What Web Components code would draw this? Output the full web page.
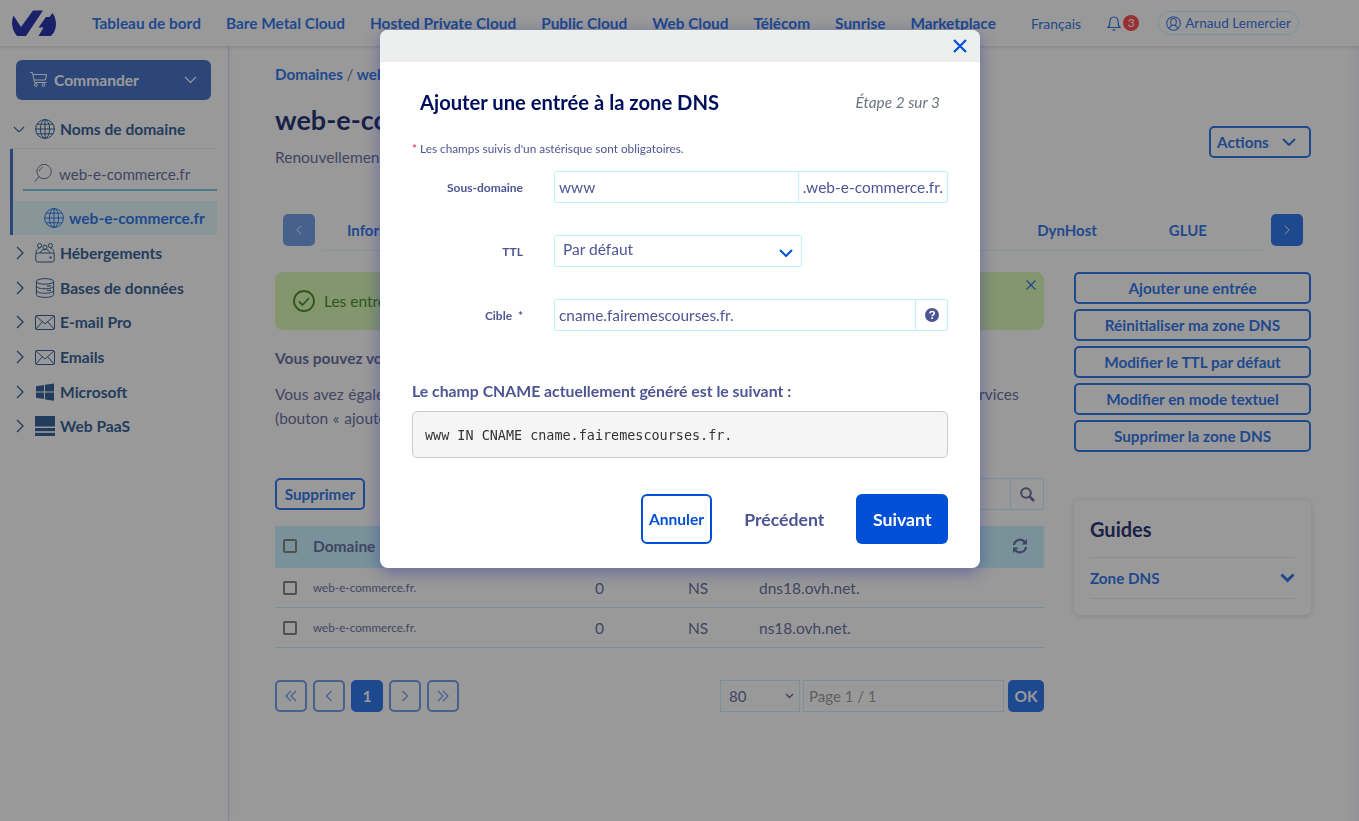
<!DOCTYPE html>
<html lang="fr">
<head>
<meta charset="utf-8">
<title>OVHcloud - Zone DNS</title>
<style>
  html, body { margin: 0; height: 100%; overflow: hidden; background: #fff; }
  html { --p: #0a5ee8; --tree: #0f4585; }
  body { font-family: "Lato", "Liberation Sans", sans-serif; color: #4d5693; }
  .shell { display: flex; height: 775px; }
</style>
</head>
<body>
<ovh-header></ovh-header>
<div class="shell">
  <ovh-sidebar></ovh-sidebar>
  <zone-page></zone-page>
</div>
<dns-modal></dns-modal>

<script>
const icons = {
  globe: `<svg viewBox="0 0 20 20" fill="none" stroke="currentColor" stroke-width="1"><circle cx="10" cy="10" r="9.4"/><ellipse cx="10" cy="10" rx="4.6" ry="9.4"/><path d="M10 .6v18.8M.6 10h18.8M2 5.2h16M2 14.8h16"/></svg>`,
  search: `<svg viewBox="0 0 20 20" fill="none" stroke="currentColor" stroke-width="1.100"><circle cx="11.2" cy="8.4" r="8"/><path d="M5.600 14 1 19.500M6 8c.2-2 1.600-3.600 3.600-4"/></svg>`,
  hosting: `<svg viewBox="0 0 20 20" fill="none" stroke="currentColor" stroke-width="1"><circle cx="4.500" cy="2.600" r="2.100"/><circle cx="10" cy="4.200" r="2.100"/><circle cx="15.500" cy="2.600" r="2.100"/><path d="M1 11c0-4 1.500-5.600 3.500-5.600M19 11c0-4-1.500-5.600-3.500-5.600M5.500 10c0-2.600 2-3.500 4.500-3.500s4.500.9 4.500 3.500"/><rect x=".8" y="10" width="18.400" height="9" rx="2"/><path d="M15.500 13.500v2" stroke-width="2"/></svg>`,
  db: `<svg viewBox="0 0 20 20" fill="none" stroke="currentColor" stroke-width="1"><ellipse cx="10" cy="3.400" rx="8.600" ry="2.800"/><path d="M1.400 3.400v13.200c0 1.600 3.800 2.800 8.600 2.800s8.600-1.200 8.600-2.800V3.400M1.400 8c0 1.600 3.800 2.800 8.600 2.800 4.800 0 8.600-1.200 8.600-2.800M1.400 12.400c0 1.600 3.800 2.800 8.600 2.800 4.800 0 8.600-1.200 8.600-2.800M12 8h4M12 12.400h4"/></svg>`,
  mail: `<svg viewBox="0 0 20 15" fill="none" stroke="currentColor" stroke-width="1"><rect x=".5" y=".5" width="19" height="14" rx="1.500"/><path d="M1 1l9 8 9-8M1 14l6.500-7.500M19 14l-6.500-7.500"/></svg>`,
  windows: `<svg viewBox="0 0 20 20" fill="currentColor"><path d="M1 4.200 9 3v6.400H1zM10 2.800 19 1.400v8H10zM1 10.600h8V17l-8-1.200zM10 10.600h9v8.200L10 17.400z"/></svg>`,
  paas: `<svg viewBox="0 0 20 20" fill="currentColor"><rect width="20" height="10.500"/><rect y="12" width="20" height="3.200"/><rect y="16.800" width="20" height="3.200"/></svg>`,
  down: `<svg viewBox="0 0 14 8" fill="none" stroke="currentColor" stroke-width="1.300"><path d="M1 1l6 6 6-6"/></svg>`,
  right: `<svg viewBox="0 0 8 14" fill="none" stroke="currentColor" stroke-width="1.300"><path d="M1 1l6 6-6 6"/></svg>`,
  left: `<svg viewBox="0 0 8 14" fill="none" stroke="currentColor" stroke-width="1.300"><path d="M7 1 1 7l6 6"/></svg>`,
  cart: `<svg viewBox="0 0 17 15" fill="none" stroke="currentColor" stroke-width="1"><path d="M0 .6h2.500l2 9.900h12M3 2.500h13.500l-1 5.500H4.200"/><circle cx="5.800" cy="13" r="1.400"/><circle cx="13.500" cy="13" r="1.400"/></svg>`
};

class OvhHeader extends HTMLElement {
  constructor() {
    super();
    this.shadowDOM = this.attachShadow({ mode: 'open' });
  }

  connectedCallback() {
    const links = ['Tableau de bord', 'Bare Metal Cloud', 'Hosted Private Cloud', 'Public Cloud', 'Web Cloud', 'Télécom', 'Sunrise', 'Marketplace'];
    this.shadowDOM.innerHTML = `
    <style>
    :host {
      display: flex;
      align-items: center;
      height: 46px;
      box-sizing: border-box;
      padding-left: 12px;
      background: #fff;
      position: relative;
      z-index: 2;
      box-shadow: 0 1px 4px rgba(0,0,0,.18);
    }
    .logo { width: 44px; height: 26px; display: block; margin-top: -1px; color: #000e9c; }
    nav { display: flex; gap: 25px; width: 904px; margin-left: 36px; font-size: 15.4px; font-weight: 700; color: var(--p); white-space: nowrap; }
    .lang { margin-left: 35px; font-size: 14px; color: var(--p); }
    .bell { width: 14px; height: 15px; margin-left: 26px; color: var(--p); }
    .badge {
      width: 16px; height: 16px; border-radius: 50%; margin-left: 2px;
      background: #ff2a30; color: #fff; font-size: 12px; line-height: 16px; text-align: center;
    }
    .chip {
      display: flex; align-items: center; gap: 4px;
      height: 24px; box-sizing: border-box; margin-left: 19px; padding: 0 7px;
      border: 1px solid #bef1ff; border-radius: 12px;
      font-size: 13.6px; color: var(--p); white-space: nowrap;
    }
    .chip svg { width: 15px; height: 15px; }
    </style>
    <svg class="logo" viewBox="12 10 44 26" fill="currentColor">
      <path d="M13.500 15.500 21 27 33 10.500H43L26 36H17Q12 30 12 23 12 19 13.500 15.500Z"/>
      <path d="M52.500 13Q56 18 56 24 56 31 51 36H38.500L43.500 27.500H38.500L46 17H49.500Z"/>
    </svg>
    <nav>${links.map(l => `<span>${l}</span>`).join('')}</nav>
    <span class="lang">Français</span>
    <svg class="bell" viewBox="0 0 14 15" fill="none" stroke="currentColor" stroke-width="1.200"><path d="M1 11.500c1.500-1 1.800-2.500 1.800-5C2.800 3 4.500 1 7 1s4.200 2 4.200 5.500c0 2.500.3 4 1.800 5zM5.500 13.800h3"/></svg>
    <span class="badge">3</span>
    <span class="chip">
      <svg viewBox="0 0 16 16" fill="none" stroke="currentColor" stroke-width="1.100"><circle cx="8" cy="8" r="7.200"/><ellipse cx="8" cy="6.300" rx="3" ry="3.700"/><path d="M3.500 13.500c.5-2.500 2-3 3-3.500M12.500 13.500c-.5-2.500-2-3-3-3.500"/></svg>
      Arnaud Lemercier
    </span>`;
  }
}

class SideItem extends HTMLElement {
  constructor() {
    super();
    this.shadowDOM = this.attachShadow({ mode: 'open' });
  }

  connectedCallback() {
    const icon = this.getAttribute('icon');
    const h = { mail: 15, paas: 20 }[icon] || 20;
    this.shadowDOM.innerHTML = `
    <style>
    :host {
      display: flex;
      align-items: center;
      height: 34.6px;
      padding-left: 16px;
      font-size: 15.6px;
      font-weight: 700;
      color: var(--tree);
      white-space: nowrap;
    }
    .chev { width: 8px; height: 14px; margin-right: 11px; }
    .ico { width: 20px; height: ${h}px; margin-right: 5px; }
    svg { display: block; }
    </style>
    <span class="chev">${icons.right}</span>
    <span class="ico">${icons[icon]}</span>
    <slot></slot>`;
  }
}

class OvhSidebar extends HTMLElement {
  constructor() {
    super();
    this.shadowDOM = this.attachShadow({ mode: 'open' });
  }

  connectedCallback() {
    this.shadowDOM.innerHTML = `
    <style>
    :host {
      display: block;
      flex: 0 0 228px;
      box-sizing: border-box;
      padding: 14px 11px 0 10px;
      background: #fff;
      box-shadow: 1px 0 0 rgba(0,14,156,.12), 3px 0 5px rgba(0,14,156,.06);
      position: relative;
      z-index: 1;
    }
    svg { display: block; }
    .order {
      display: flex; align-items: center;
      height: 40px; margin: 0 6px 0 6px; padding: 0 14px 1px;
      background: #2658c0; border-radius: 6px; color: #fff;
      font-size: 15.6px; font-weight: 700; box-sizing: border-box;
    }
    .order .cart { width: 17px; height: 15px; margin-right: 7px; }
    .order .dn { width: 13px; height: 8px; margin-left: auto; }
    .root {
      display: flex; align-items: center;
      height: 39px; margin-top: 10px; padding-left: 3px;
      border-bottom: 1px solid rgba(17,63,109,.12);
      font-size: 15.6px; font-weight: 700; color: var(--tree);
      box-sizing: border-box;
    }
    .root .dn { width: 12px; height: 7px; margin-right: 10px; }
    .root .ico { width: 20px; height: 20px; margin-right: 5px; }
    .group { border-left: 3px solid #2658c0; }
    .find {
      display: flex; align-items: center;
      height: 42px; margin: 0 0 10px 10px; padding: 10px 0 0 11px;
      border-bottom: 2px solid #60c3e4;
      font-size: 15.2px; color: #4d5693;
      box-sizing: border-box;
    }
    .find .ico { width: 18px; height: 20px; margin-right: 7px; }
    .sel {
      display: flex; align-items: center;
      height: 34px; padding-left: 31px;
      background: rgba(190,241,255,.5);
      font-size: 15.5px; font-weight: 700; color: var(--p);
    }
    .sel .ico { width: 20px; height: 20px; margin-right: 5px; }
    .items { margin-left: -10px; margin-right: -11px; padding-top: 1px; }
    </style>
    <div class="order"><span class="cart">${icons.cart}</span>Commander<span class="dn">${icons.down}</span></div>
    <div class="root"><span class="dn">${icons.down}</span><span class="ico">${icons.globe}</span>Noms de domaine</div>
    <div class="group">
      <div class="find"><span class="ico">${icons.search}</span>web-e-commerce.fr</div>
      <div class="sel"><span class="ico">${icons.globe}</span>web-e-commerce.fr</div>
    </div>
    <div class="items">
      <side-item icon="hosting">Hébergements</side-item>
      <side-item icon="db">Bases de données</side-item>
      <side-item icon="mail">E-mail Pro</side-item>
      <side-item icon="mail">Emails</side-item>
      <side-item icon="windows">Microsoft</side-item>
      <side-item icon="paas">Web PaaS</side-item>
    </div>`;
  }
}

class OutlineBtn extends HTMLElement {
  constructor() {
    super();
    this.shadowDOM = this.attachShadow({ mode: 'open' });
  }

  connectedCallback() {
    this.shadowDOM.innerHTML = `
    <style>
    :host {
      display: flex;
      align-items: center;
      justify-content: center;
      gap: 13px;
      height: 32px;
      box-sizing: border-box;
      padding: 0 6px;
      border: 2px solid var(--p);
      border-radius: 5px;
      font-size: 15.3px;
      font-weight: 700;
      color: var(--p);
      white-space: nowrap;
    }
    </style>
    <slot></slot>`;
  }
}

class PageBtn extends HTMLElement {
  constructor() {
    super();
    this.shadowDOM = this.attachShadow({ mode: 'open' });
  }

  connectedCallback() {
    this.shadowDOM.innerHTML = `
    <style>
    :host {
      display: flex;
      align-items: center;
      justify-content: center;
      width: 32px;
      height: 32px;
      box-sizing: border-box;
      border: 2px solid #5b8ee6;
      border-radius: 5px;
      color: #5b8ee6;
      font-size: 15px;
      font-weight: 700;
    }
    :host([solid]) { background: var(--p); border-color: var(--p); color: #fff; }
    </style>
    <slot></slot>`;
  }
}

class DnsTable extends HTMLElement {
  constructor() {
    super();
    this.shadowDOM = this.attachShadow({ mode: 'open' });
  }

  connectedCallback() {
    const rows = [['dns18.ovh.net.'], ['ns18.ovh.net.']];
    this.shadowDOM.innerHTML = `
    <style>
    :host { display: block; margin-top: 16px; font-size: 15.5px; color: #4d5693; }
    .row {
      display: grid;
      grid-template-columns: 38px 282px 93px 71px 1fr;
      align-items: center;
      height: 40px;
      box-sizing: border-box;
      border-bottom: 1px solid #bef1ff;
    }
    .head { height: 42px; background: #bef1ff; border: 0; font-weight: 700; padding-bottom: 2px; }
    .box { width: 14px; height: 14px; margin-left: 8px; box-sizing: border-box; border: 2px solid #6d6d6d; border-radius: 2px; background: #fff; }
    .head .box { background: #bef1ff; }
    .dom { font-size: 11.7px; margin-top: -1px; }
    .sync { justify-self: end; margin-right: 16px; width: 16px; height: 16px; color: #4d5693; display: block; }
    </style>
    <div class="row head">
      <span class="box"></span><span>Domaine</span><span></span><span></span>
      <svg class="sync" viewBox="0 0 16 16" fill="none" stroke="currentColor" stroke-width="2.200"><path d="M2 7a6 6 0 0 1 10.300-3.500L14 5M14 9a6 6 0 0 1-10.300 3.500L2 11"/><path d="M15 1v5.500H9.500M1 15V9.500h5.500" fill="currentColor" stroke="none"/></svg>
    </div>
    ${rows.map(r => `
    <div class="row">
      <span class="box"></span>
      <span class="dom">web-e-commerce.fr.</span>
      <span>0</span><span>NS</span><span>${r[0]}</span>
    </div>`).join('')}`;
  }
}

class ZonePage extends HTMLElement {
  constructor() {
    super();
    this.shadowDOM = this.attachShadow({ mode: 'open' });
  }

  connectedCallback() {
    this.shadowDOM.innerHTML = `
    <style>
    :host {
      display: block;
      flex: 1;
      box-sizing: border-box;
      padding: 18px 48px 0 47px;
      font-size: 15.5px;
      color: #4d5693;
      box-shadow: inset -14px 0 14px -12px rgba(0,14,156,.08);
    }
    .crumb { height: 20px; line-height: 20px; font-weight: 700; color: var(--p); font-size: 15.2px; }
    .crumb span { color: #4d5693; font-weight: 400; }
    .top { display: flex; justify-content: space-between; align-items: flex-start; margin-top: 16px; height: 68px; }
    h1 { margin: 0; font-size: 27px; line-height: 40px; font-weight: 700; color: #000e5c; }
    .top p { margin: 6px 0 0; line-height: 22px; }
    .top outline-btn { width: 102px; margin-top: 26px; justify-content: flex-start; }
    .top svg { width: 14px; height: 8px; }
    .tabs { display: flex; align-items: flex-start; margin: 46px 8px 0; height: 58px; }
    .nav { width: 32px; height: 32px; border-radius: 5px; display: flex; align-items: center; justify-content: center; background: var(--p); color: #fff; flex: none; }
    .nav.off { background: #5b8ee6; }
    .nav svg { width: 6px; height: 10px; display: block; }
    .list {
      flex: 1; display: flex; align-items: center; gap: 72px;
      height: 37px; margin: 0 8px; padding: 0 56px 5px 24px; box-sizing: border-box;
      border-bottom: 1px solid rgba(96,195,228,.25);
      font-weight: 700; font-size: 15px; color: var(--p); white-space: nowrap;
    }
    .list span:first-child { margin-right: auto; }
    .cols { display: grid; grid-template-columns: 769px 237px; gap: 30px; }
    .alert {
      position: relative;
      display: flex; align-items: center; gap: 9px;
      height: 58px; box-sizing: border-box; padding-left: 18px;
      background: #d3f8a9; border-radius: 8px; color: #2c7a00;
    }
    .tick { width: 22px; height: 22px; flex: none; }
    .alert .x { position: absolute; top: 8px; right: 8px; width: 10px; height: 10px; color: var(--p); }
    .lead { margin: 17px 0 0; line-height: 22px; font-weight: 700; }
    .para { margin: 13px 0 0; line-height: 24px; width: 760px; word-spacing: .7px; }
    .bar { display: flex; justify-content: space-between; margin-top: 48px; }
    .bar outline-btn { width: 90px; }
    .lookup { display: flex; width: 200px; height: 32px; box-sizing: border-box; border: 1px solid #bef1ff; justify-content: flex-end; }
    .lookup span { width: 32px; border-left: 1px solid #bef1ff; display: flex; align-items: center; justify-content: center; }
    .lookup svg { width: 15px; height: 15px; }
    .pager { display: flex; gap: 6px; margin-top: 32px; align-items: center; }
    .select {
      display: flex; align-items: center; justify-content: space-between;
      width: 80px; height: 32px; box-sizing: border-box; margin-left: auto; padding: 0 5px 0 8px;
      border: 1px solid #bef1ff; font-size: 15px;
    }
    .select svg { width: 9px; height: 6px; }
    .input {
      width: 201px; height: 32px; box-sizing: border-box; margin-left: -3px; padding: 0 5px;
      border: 1px solid #bef1ff; color: #8c8c8c; line-height: 30px; font-size: 15px;
    }
    .okbtn { width: 36px; height: 32px; margin-left: -2px; border-radius: 5px; background: var(--p); color: #fff; font-weight: 700; display: flex; align-items: center; justify-content: center; }
    .actions { display: flex; flex-direction: column; gap: 5px; }
    .guides {
      margin-top: 48px; height: 115px; box-sizing: border-box; padding: 16px;
      border-radius: 6px; background: #fff;
      box-shadow: 0 1px 6px rgba(0,14,92,.18);
    }
    .guides h2 { margin: 0; font-size: 20px; line-height: 26px; font-weight: 700; color: #000e5c; }
    .guide {
      display: flex; justify-content: space-between; align-items: center;
      height: 42px; margin-top: 15px; box-sizing: border-box;
      border-top: 1px solid #e6e6ee; border-bottom: 1px solid #e6e6ee;
      font-weight: 700; font-size: 15.2px; color: var(--p);
    }
    .guide svg { width: 15px; height: 10px; }
    </style>
    <div class="crumb">Domaines <span>/</span>&nbsp;web-e-commerce.fr</div>
    <div class="top">
      <div>
        <h1>web-e-commerce.fr</h1>
        <p>Renouvellement automatique</p>
      </div>
      <outline-btn>Actions <svg viewBox="0 0 14 8" fill="none" stroke="currentColor" stroke-width="2"><path d="M1 1l6 6 6-6"/></svg></outline-btn>
    </div>
    <div class="tabs">
      <span class="nav off">${icons.left}</span>
      <div class="list"><span>Informations générales</span><span>DynHost</span><span>GLUE</span></div>
      <span class="nav">${icons.right}</span>
    </div>
    <div class="cols">
      <div>
        <div class="alert">
          <svg class="tick" viewBox="0 0 22 22" fill="none" stroke="currentColor" stroke-width="1.800"><circle cx="11" cy="11" r="10"/><path d="M6 11.500l3.500 3.500L16 8"/></svg>
          Les entrées ont bien été ajoutées.
          <svg class="x" viewBox="0 0 10 10" fill="none" stroke="currentColor" stroke-width="1.200"><path d="M.5.5l9 9M9.500.5l-9 9"/></svg>
        </div>
        <p class="lead">Vous pouvez vous référer au guide.</p>
        <p class="para">Vous avez également la possibilité d'ajouter manuellement des entrées DNS afin de reconfigurer vos services (bouton « ajouter une entrée »).</p>
        <div class="bar">
          <outline-btn>Supprimer</outline-btn>
          <div class="lookup"><span><svg viewBox="0 0 15 15" fill="none" stroke="#4d5693" stroke-width="2"><circle cx="6" cy="6" r="4.800"/><path d="M9.500 9.500 14 14" stroke-width="2.600"/></svg></span></div>
        </div>
        <dns-table></dns-table>
        <div class="pager">
          <page-btn><svg width="12" height="12" viewBox="0 0 12 12" fill="none" stroke="currentColor" stroke-width="1.300"><path d="M6 1 1 6l5 5M11 1 6 6l5 5"/></svg></page-btn>
          <page-btn><svg width="8" height="12" viewBox="0 0 8 12" fill="none" stroke="currentColor" stroke-width="1.300"><path d="M6.500 1 1.500 6l5 5"/></svg></page-btn>
          <page-btn solid>1</page-btn>
          <page-btn><svg width="8" height="12" viewBox="0 0 8 12" fill="none" stroke="currentColor" stroke-width="1.300"><path d="M1.500 1l5 5-5 5"/></svg></page-btn>
          <page-btn><svg width="12" height="12" viewBox="0 0 12 12" fill="none" stroke="currentColor" stroke-width="1.300"><path d="M1 1l5 5-5 5M6 1l5 5-5 5"/></svg></page-btn>
          <div class="select">80<svg viewBox="0 0 9 6" fill="none" stroke="currentColor" stroke-width="1.500"><path d="M1 1l3.500 3.500L8 1"/></svg></div>
          <div class="input">Page 1 / 1</div>
          <div class="okbtn">OK</div>
        </div>
      </div>
      <div>
        <div class="actions">
          <outline-btn>Ajouter une entrée</outline-btn>
          <outline-btn>Réinitialiser ma zone DNS</outline-btn>
          <outline-btn>Modifier le TTL par défaut</outline-btn>
          <outline-btn>Modifier en mode textuel</outline-btn>
          <outline-btn>Supprimer la zone DNS</outline-btn>
        </div>
        <div class="guides">
          <h2>Guides</h2>
          <div class="guide">Zone DNS<svg viewBox="0 0 15 10" fill="none" stroke="currentColor" stroke-width="3"><path d="M1.500 1.500l6 6 6-6"/></svg></div>
        </div>
      </div>
    </div>`;
  }
}

class DnsField extends HTMLElement {
  constructor() {
    super();
    this.shadowDOM = this.attachShadow({ mode: 'open' });
  }

  connectedCallback() {
    this.shadowDOM.innerHTML = `
    <style>
    :host {
      display: grid;
      grid-template-columns: 111px 394px;
      column-gap: 31px;
      align-items: center;
    }
    .label { text-align: right; font-size: 12px; font-weight: 700; color: #4d5693; }
    </style>
    <span class="label">${this.getAttribute('label')}</span>
    <div><slot></slot></div>`;
  }
}

class DnsModal extends HTMLElement {
  constructor() {
    super();
    this.shadowDOM = this.attachShadow({ mode: 'open' });
  }

  connectedCallback() {
    this.shadowDOM.innerHTML = `
    <style>
    :host {
      position: fixed;
      inset: 0;
      z-index: 10;
      display: flex;
      justify-content: center;
      align-items: flex-start;
      padding-top: 30px;
      box-sizing: border-box;
      background: rgba(51,51,51,.5);
    }
    .dialog {
      width: 600px;
      height: 538px;
      box-sizing: border-box;
      margin-left: 1px;
      background: #fff;
      border-radius: 8px;
      box-shadow: 0 4px 16px rgba(0,14,156,.35);
      overflow: hidden;
      font-size: 15.5px;
      color: #4d5693;
    }
    .band { display: flex; justify-content: flex-end; align-items: center; height: 32px; padding-right: 12px; background: #ecefee; }
    .band svg { width: 16px; height: 16px; display: block; }
    .body { padding: 0 32px; }
    .title { display: flex; justify-content: space-between; align-items: center; margin: 25px 8px 0; height: 30px; }
    h2 { margin: 0; font-size: 20.2px; font-weight: 700; color: #000e5c; }
    .step { font-style: italic; color: #6d7580; font-size: 15.4px; }
    .note { margin: 24px 0 0; height: 16px; line-height: 16px; font-size: 11.8px; }
    .note b { color: #e4252a; font-weight: 400; }
    .fields { display: flex; flex-direction: column; gap: 32px; margin-top: 14px; }
    .control { display: flex; height: 32px; box-sizing: border-box; border: 1px solid #bef1ff; border-radius: 2px; align-items: center; }
    .control .val { flex: 1; padding: 0 4px; font-size: 15.4px; }
    .control .add { height: 100%; display: flex; align-items: center; justify-content: center; padding: 0 4px; border-left: 1px solid #bef1ff; box-sizing: border-box; white-space: nowrap; }
    .ttl { width: 248px; justify-content: space-between; padding: 0 8px 4px; }
    .ttl svg { width: 14px; height: 8px; color: #0050d7; margin-top: 7px; }
    .help { width: 32px; }
    .help svg { width: 14px; height: 14px; display: block; }
    h3 { margin: 49px 0 0; font-size: 15.8px; line-height: 22px; font-weight: 700; color: #4d5693; }
    pre {
      margin: 9px 0 0; height: 47px; box-sizing: border-box; padding: 2px 12px 0;
      display: flex; align-items: center;
      background: #f5f5f5; border: 1px solid #cccccc; border-radius: 5px;
      font-family: "DejaVu Sans Mono", "Liberation Mono", monospace; font-size: 13.45px; color: #333;
    }
    .btns { display: flex; justify-content: flex-end; margin-top: 36px; height: 50px; font-size: 17.7px; font-weight: 700; }
    .btns span { display: flex; align-items: center; box-sizing: border-box; border-radius: 6px; }
    .cancel { border: 2px solid #0050d7; color: #0050d7; padding: 0 6px; font-size: 15.6px; }
    .prev { padding: 0 32px; }
    .next { background: #0050d7; color: #fff; padding: 0 16.5px; }
    </style>
    <div class="dialog" role="dialog">
      <div class="band"><svg viewBox="0 0 16 16" fill="none" stroke="#0050d7" stroke-width="2.200"><path d="M2 2l12 12M14 2 2 14"/></svg></div>
      <div class="body">
        <div class="title"><h2>Ajouter une entrée à la zone DNS</h2><span class="step">Étape 2 sur 3</span></div>
        <p class="note"><b>*</b> Les champs suivis d'un astérisque sont obligatoires.</p>
        <div class="fields">
          <dns-field label="Sous-domaine">
            <div class="control"><span class="val">www</span><span class="add">.web-e-commerce.fr.</span></div>
          </dns-field>
          <dns-field label="TTL">
            <div class="control ttl">Par défaut<svg viewBox="0 0 14 8" fill="none" stroke="currentColor" stroke-width="2"><path d="M1 1l6 6 6-6"/></svg></div>
          </dns-field>
          <dns-field label="Cible &nbsp;*">
            <div class="control"><span class="val">cname.fairemescourses.fr.</span><span class="add help"><svg viewBox="0 0 14 14"><circle cx="7" cy="7" r="7" fill="#4d5693"/><path d="M4.800 5.400c.1-1.300 1-2 2.300-2 1.200 0 2.200.7 2.200 1.800 0 1.700-2.200 1.500-2.200 3.100" fill="none" stroke="#fff" stroke-width="1.500"/><rect x="6.200" y="9.300" width="1.700" height="1.700" fill="#fff"/></svg></span></div>
          </dns-field>
        </div>
        <h3>Le champ CNAME actuellement généré est le suivant :</h3>
        <pre>www IN CNAME cname.fairemescourses.fr.</pre>
        <div class="btns">
          <span class="cancel">Annuler</span>
          <span class="prev">Précédent</span>
          <span class="next">Suivant</span>
        </div>
      </div>
    </div>`;
  }
}

customElements.define('ovh-header', OvhHeader);
customElements.define('side-item', SideItem);
customElements.define('ovh-sidebar', OvhSidebar);
customElements.define('outline-btn', OutlineBtn);
customElements.define('page-btn', PageBtn);
customElements.define('dns-table', DnsTable);
customElements.define('zone-page', ZonePage);
customElements.define('dns-field', DnsField);
customElements.define('dns-modal', DnsModal);
</script>
</body>
</html>
